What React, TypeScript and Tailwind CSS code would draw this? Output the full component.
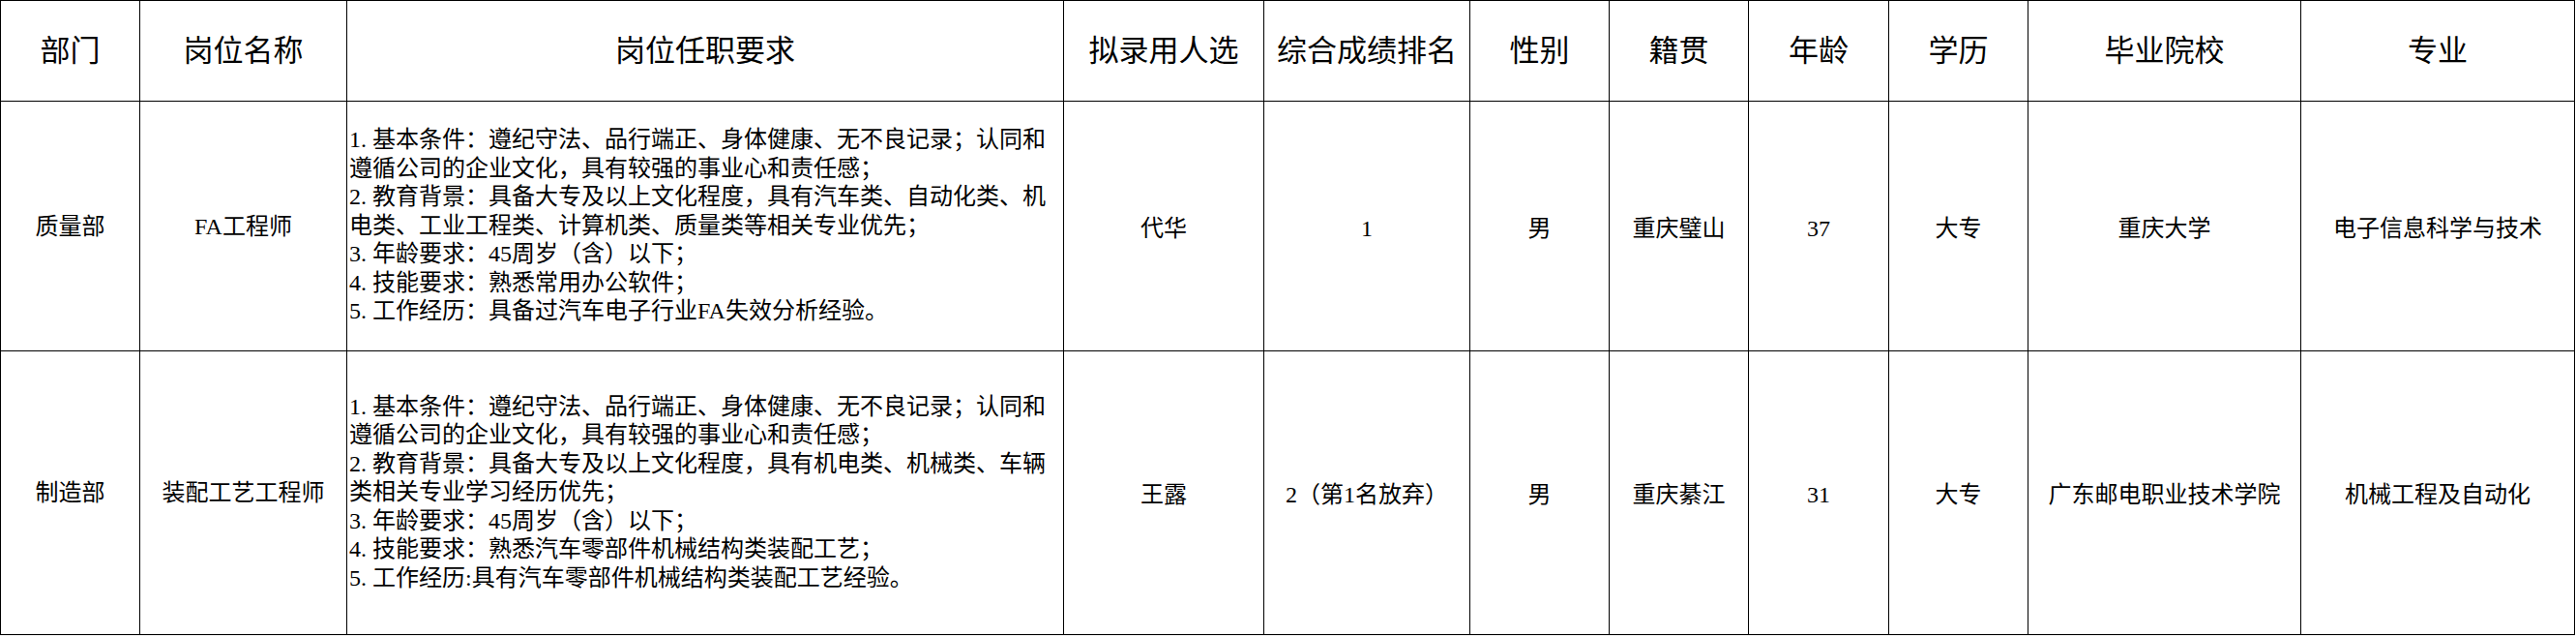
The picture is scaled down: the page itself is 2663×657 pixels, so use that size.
import React from 'react';

const headers = [
  '部门',
  '岗位名称',
  '岗位任职要求',
  '拟录用人选',
  '综合成绩排名',
  '性别',
  '籍贯',
  '年龄',
  '学历',
  '毕业院校',
  '专业',
];

type Row = {
  dept: string;
  post: string;
  reqs: string[];
  rest: string[];
};

const rows: Row[] = [
  {
    dept: '质量部',
    post: 'FA工程师',
    reqs: [
      '1. 基本条件：遵纪守法、品行端正、身体健康、无不良记录；认同和',
      '遵循公司的企业文化，具有较强的事业心和责任感；',
      '2. 教育背景：具备大专及以上文化程度，具有汽车类、自动化类、机',
      '电类、工业工程类、计算机类、质量类等相关专业优先；',
      '3. 年龄要求：45周岁（含）以下；',
      '4. 技能要求：熟悉常用办公软件；',
      '5. 工作经历：具备过汽车电子行业FA失效分析经验。',
    ],
    rest: ['代华', '1', '男', '重庆璧山', '37', '大专', '重庆大学', '电子信息科学与技术'],
  },
  {
    dept: '制造部',
    post: '装配工艺工程师',
    reqs: [
      '1. 基本条件：遵纪守法、品行端正、身体健康、无不良记录；认同和',
      '遵循公司的企业文化，具有较强的事业心和责任感；',
      '2. 教育背景：具备大专及以上文化程度，具有机电类、机械类、车辆',
      '类相关专业学习经历优先；',
      '3. 年龄要求：45周岁（含）以下；',
      '4. 技能要求：熟悉汽车零部件机械结构类装配工艺；',
      '5. 工作经历:具有汽车零部件机械结构类装配工艺经验。',
    ],
    rest: ['王露', '2（第1名放弃）', '男', '重庆綦江', '31', '大专', '广东邮电职业技术学院', '机械工程及自动化'],
  },
];

function Cell({ children }: { children: React.ReactNode }) {
  return (
    <div className="flex items-center justify-center bg-white text-center whitespace-nowrap">
      {children}
    </div>
  );
}

export default function App() {
  return (
    <div className="min-h-screen bg-white font-['Liberation_Serif','Noto_Sans_CJK_SC',serif] text-black">
      <div className="grid w-[2662px] grid-cols-[143px_213px_740px_206px_212px_143px_143px_144px_143px_281px_282px] grid-rows-[103px_257px_292px] gap-px border border-black bg-black">
        {headers.map((h) => (
          <div key={h} className="flex items-center justify-center bg-white pt-[2px] text-[31px] whitespace-nowrap">
            {h}
          </div>
        ))}

        {rows.map((row) => (
          <React.Fragment key={row.dept}>
            <Cell>
              <span className="text-[24px]">{row.dept}</span>
            </Cell>
            <Cell>
              <span className="text-[24px]">{row.post}</span>
            </Cell>
            <div className="flex flex-col justify-center bg-white pl-[2px] text-[24px] leading-[29.5px] whitespace-nowrap">
              {row.reqs.map((line, i) => (
                <div key={i}>{line}</div>
              ))}
            </div>
            {row.rest.map((val, i) => (
              <Cell key={i}>
                <span className="pt-[4px] text-[24px]">{val}</span>
              </Cell>
            ))}
          </React.Fragment>
        ))}
      </div>
      <div className="h-px w-[2662px] bg-[#f0f0f0]" />
    </div>
  );
}
